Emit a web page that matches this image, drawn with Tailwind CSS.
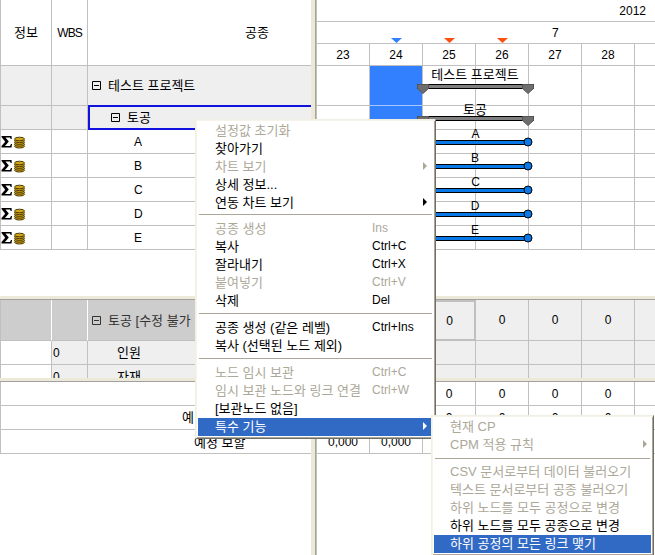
<!DOCTYPE html>
<html lang="ko">
<head>
<meta charset="utf-8">
<script src="https://cdn.jsdelivr.net/npm/@tailwindcss/browser@4"></script>
</head>
<body class="bg-white">
<div class="relative flex h-[555px] w-[655px] overflow-hidden bg-white text-[13px] leading-none text-black font-['Liberation_Sans','Noto_Sans_CJK_KR',sans-serif]">

  <!-- LEFT PANE -->
  <div class="flex w-[311px] shrink-0 flex-col">
    <div class="h-[296px] shrink-0">
      <div class="grid grid-cols-[52px_36px_1fr] grid-rows-[66px_40px_24px_24px_24px_24px_24px_24px] border-[#c0c0c0]">
        <div class="flex items-center justify-center border-r border-b border-l border-[#c0c0c0]">정보</div>
        <div class="flex items-center justify-center border-r border-b border-[#c0c0c0] text-[12px] tracking-[-1px]">WBS</div>
        <div class="flex items-center border-b border-[#c0c0c0] pl-[157px]">공종</div>

        <div class="border-r border-b border-l border-[#c0c0c0] bg-[#efefef]"></div>
        <div class="border-r border-b border-[#c0c0c0] bg-[#efefef]"></div>
        <div class="flex items-center gap-[7px] border-b border-[#c0c0c0] bg-[#efefef] pl-[4px]">
          <svg width="9" height="9" viewBox="0 0 9 9" class="shrink-0"><path d="M.5.5h8v8h-8zM2 4.500h5" fill="none" stroke="#000"/></svg>
          <span>테스트 프로젝트</span>
        </div>

        <div class="border-r border-b border-l border-[#c0c0c0] bg-[#efefef]"></div>
        <div class="border-r border-b border-[#c0c0c0] bg-[#efefef]"></div>
        <div class="-mt-px flex items-center gap-[7px] border-y-2 border-l-2 border-[#1212e0] bg-[#efefef] pl-[21px]">
          <svg width="9" height="9" viewBox="0 0 9 9" class="shrink-0"><path d="M.5.5h8v8h-8zM2 4.500h5" fill="none" stroke="#000"/></svg>
          <span>토공</span>
        </div>

        <div class="flex items-center border-r border-b border-l border-[#c0c0c0]"><svg width="26" height="14" viewBox="0 0 26 14"><path d="M.5 1h10l.3 3h-1L9 2.500H4.500l3.300 4-3.800 4.500H9l1-2h1l-.5 3.500H.5V11L4.200 6.800.5 2z" fill="#000"/><g stroke="#3a3000" stroke-width=".9" fill="#d4a418"><ellipse cx="18.500" cy="11.200" rx="5" ry="1.800"/><ellipse cx="18.500" cy="9.400" rx="5" ry="1.800"/><ellipse cx="18.500" cy="7.600" rx="5" ry="1.800"/><ellipse cx="18.500" cy="5.800" rx="5" ry="1.800"/><ellipse cx="18.500" cy="4" rx="5" ry="1.800"/></g></svg></div>
        <div class="border-r border-b border-[#c0c0c0]"></div>
        <div class="flex items-center border-b border-[#c0c0c0] pl-[46px] text-[12px]">A</div>

        <div class="flex items-center border-r border-b border-l border-[#c0c0c0]"><svg width="26" height="14" viewBox="0 0 26 14"><path d="M.5 1h10l.3 3h-1L9 2.500H4.500l3.300 4-3.800 4.500H9l1-2h1l-.5 3.500H.5V11L4.200 6.800.5 2z" fill="#000"/><g stroke="#3a3000" stroke-width=".9" fill="#d4a418"><ellipse cx="18.500" cy="11.200" rx="5" ry="1.800"/><ellipse cx="18.500" cy="9.400" rx="5" ry="1.800"/><ellipse cx="18.500" cy="7.600" rx="5" ry="1.800"/><ellipse cx="18.500" cy="5.800" rx="5" ry="1.800"/><ellipse cx="18.500" cy="4" rx="5" ry="1.800"/></g></svg></div>
        <div class="border-r border-b border-[#c0c0c0]"></div>
        <div class="flex items-center border-b border-[#c0c0c0] pl-[46px] text-[12px]">B</div>

        <div class="flex items-center border-r border-b border-l border-[#c0c0c0]"><svg width="26" height="14" viewBox="0 0 26 14"><path d="M.5 1h10l.3 3h-1L9 2.500H4.500l3.300 4-3.800 4.500H9l1-2h1l-.5 3.500H.5V11L4.200 6.800.5 2z" fill="#000"/><g stroke="#3a3000" stroke-width=".9" fill="#d4a418"><ellipse cx="18.500" cy="11.200" rx="5" ry="1.800"/><ellipse cx="18.500" cy="9.400" rx="5" ry="1.800"/><ellipse cx="18.500" cy="7.600" rx="5" ry="1.800"/><ellipse cx="18.500" cy="5.800" rx="5" ry="1.800"/><ellipse cx="18.500" cy="4" rx="5" ry="1.800"/></g></svg></div>
        <div class="border-r border-b border-[#c0c0c0]"></div>
        <div class="flex items-center border-b border-[#c0c0c0] pl-[46px] text-[12px]">C</div>

        <div class="flex items-center border-r border-b border-l border-[#c0c0c0]"><svg width="26" height="14" viewBox="0 0 26 14"><path d="M.5 1h10l.3 3h-1L9 2.500H4.500l3.300 4-3.800 4.500H9l1-2h1l-.5 3.500H.5V11L4.200 6.800.5 2z" fill="#000"/><g stroke="#3a3000" stroke-width=".9" fill="#d4a418"><ellipse cx="18.500" cy="11.200" rx="5" ry="1.800"/><ellipse cx="18.500" cy="9.400" rx="5" ry="1.800"/><ellipse cx="18.500" cy="7.600" rx="5" ry="1.800"/><ellipse cx="18.500" cy="5.800" rx="5" ry="1.800"/><ellipse cx="18.500" cy="4" rx="5" ry="1.800"/></g></svg></div>
        <div class="border-r border-b border-[#c0c0c0]"></div>
        <div class="flex items-center border-b border-[#c0c0c0] pl-[46px] text-[12px]">D</div>

        <div class="flex items-center border-r border-b border-l border-[#c0c0c0]"><svg width="26" height="14" viewBox="0 0 26 14"><path d="M.5 1h10l.3 3h-1L9 2.500H4.500l3.300 4-3.800 4.500H9l1-2h1l-.5 3.500H.5V11L4.200 6.800.5 2z" fill="#000"/><g stroke="#3a3000" stroke-width=".9" fill="#d4a418"><ellipse cx="18.500" cy="11.200" rx="5" ry="1.800"/><ellipse cx="18.500" cy="9.400" rx="5" ry="1.800"/><ellipse cx="18.500" cy="7.600" rx="5" ry="1.800"/><ellipse cx="18.500" cy="5.800" rx="5" ry="1.800"/><ellipse cx="18.500" cy="4" rx="5" ry="1.800"/></g></svg></div>
        <div class="border-r border-b border-[#c0c0c0]"></div>
        <div class="flex items-center border-b border-[#c0c0c0] pl-[46px] text-[12px]">E</div>
      </div>
    </div>

    <div class="h-[4px] shrink-0 border-b border-[#a0a0a0] bg-[#ece9d8]"></div>

    <div class="h-[78px] shrink-0 overflow-hidden">
      <div class="grid grid-cols-[52px_36px_1fr] grid-rows-[41px_24px_24px]">
        <div class="border-r border-b border-l border-r-white border-b-[#c0c0c0] border-l-[#c0c0c0] bg-[#cdcdcd]"></div>
        <div class="border-r border-b border-r-white border-b-[#c0c0c0] bg-[#cdcdcd]"></div>
        <div class="flex items-center gap-[7px] border-b border-[#c0c0c0] bg-[#cdcdcd] pl-[4px] text-[#333]">
          <svg width="9" height="9" viewBox="0 0 9 9" class="shrink-0"><path d="M.5.5h8v8h-8zM2 4.500h5" fill="none" stroke="#333"/></svg>
          <span>토공 [수정 불가</span>
        </div>
        <div class="border-r border-b border-l border-[#c0c0c0]"></div>
        <div class="flex items-center border-r border-b border-[#c0c0c0] bg-[#efefef] pl-px text-[12px]">0</div>
        <div class="flex items-center border-b border-[#c0c0c0] bg-[#efefef] pl-[29px]">인원</div>
        <div class="border-r border-b border-l border-[#c0c0c0]"></div>
        <div class="flex items-center border-r border-b border-[#c0c0c0] bg-[#efefef] pl-px text-[12px]">0</div>
        <div class="flex items-center border-b border-[#c0c0c0] bg-[#efefef] pl-[29px]">자재</div>
      </div>
    </div>

    <div class="h-[4px] shrink-0 border-b border-[#a0a0a0] bg-[#ece9d8]"></div>

    <div class="grid grid-rows-[24px_24px_24px] border-l border-[#c0c0c0]">
      <div class="border-b border-[#c0c0c0]"></div>
      <div class="flex items-center border-b border-[#c0c0c0] pl-[181px]">예</div>
      <div class="flex items-center border-b border-[#c0c0c0] pt-[2px] pl-[193px]">예정 보할</div>
    </div>
  </div>

  <!-- VERTICAL SPLITTER -->
  <div class="w-[5px] shrink-0 border-r border-[#a8a595] bg-[#ece9d8]"></div>

  <!-- RIGHT PANE -->
  <div class="relative flex min-w-0 flex-1 flex-col border-l border-[#c0c0c0]">
    <div class="relative h-[296px] shrink-0">
      <div class="flex h-[22px] items-center justify-end border-b border-[#c0c0c0] pr-[9px] text-[12px]">2012</div>
      <div class="flex h-[22px] items-center border-b border-[#c0c0c0] pl-[235px] text-[12px]">7</div>

      <div class="grid grid-cols-[53px_repeat(6,53px)_20px] grid-rows-[22px_40px_24px_24px_24px_24px_24px_24px] text-[12px]">
        <div class="flex items-center justify-center border-r border-b border-[#c0c0c0]">23</div>
        <div class="flex items-center justify-center border-r border-b border-[#c0c0c0]">24</div>
        <div class="flex items-center justify-center border-r border-b border-[#c0c0c0]">25</div>
        <div class="flex items-center justify-center border-r border-b border-[#c0c0c0]">26</div>
        <div class="flex items-center justify-center border-r border-b border-[#c0c0c0]">27</div>
        <div class="flex items-center justify-center border-r border-b border-[#c0c0c0]">28</div>
        <div class="border-r border-b border-[#c0c0c0]"></div>
        <div class="border-b border-[#c0c0c0]"></div>

        <div class="border-r border-b border-[#c0c0c0]"></div><div class="border-r border-b border-[#c0c0c0] border-b-[#a9c8ff] bg-[#3380ff]"></div><div class="border-r border-b border-[#c0c0c0]"></div><div class="border-r border-b border-[#c0c0c0]"></div><div class="border-r border-b border-[#c0c0c0]"></div><div class="border-r border-b border-[#c0c0c0]"></div><div class="border-r border-b border-[#c0c0c0]"></div><div class="border-b border-[#c0c0c0]"></div>
        <div class="border-r border-b border-[#c0c0c0]"></div><div class="border-r border-b border-[#c0c0c0] bg-[#3380ff]"></div><div class="border-r border-b border-[#c0c0c0]"></div><div class="border-r border-b border-[#c0c0c0]"></div><div class="border-r border-b border-[#c0c0c0]"></div><div class="border-r border-b border-[#c0c0c0]"></div><div class="border-r border-b border-[#c0c0c0]"></div><div class="border-b border-[#c0c0c0]"></div>
        <div class="border-r border-b border-[#c0c0c0]"></div><div class="border-r border-b border-[#c0c0c0]"></div><div class="border-r border-b border-[#c0c0c0]"></div><div class="border-r border-b border-[#c0c0c0]"></div><div class="border-r border-b border-[#c0c0c0]"></div><div class="border-r border-b border-[#c0c0c0]"></div><div class="border-r border-b border-[#c0c0c0]"></div><div class="border-b border-[#c0c0c0]"></div>
        <div class="border-r border-b border-[#c0c0c0]"></div><div class="border-r border-b border-[#c0c0c0]"></div><div class="border-r border-b border-[#c0c0c0]"></div><div class="border-r border-b border-[#c0c0c0]"></div><div class="border-r border-b border-[#c0c0c0]"></div><div class="border-r border-b border-[#c0c0c0]"></div><div class="border-r border-b border-[#c0c0c0]"></div><div class="border-b border-[#c0c0c0]"></div>
        <div class="border-r border-b border-[#c0c0c0]"></div><div class="border-r border-b border-[#c0c0c0]"></div><div class="border-r border-b border-[#c0c0c0]"></div><div class="border-r border-b border-[#c0c0c0]"></div><div class="border-r border-b border-[#c0c0c0]"></div><div class="border-r border-b border-[#c0c0c0]"></div><div class="border-r border-b border-[#c0c0c0]"></div><div class="border-b border-[#c0c0c0]"></div>
        <div class="border-r border-b border-[#c0c0c0]"></div><div class="border-r border-b border-[#c0c0c0]"></div><div class="border-r border-b border-[#c0c0c0]"></div><div class="border-r border-b border-[#c0c0c0]"></div><div class="border-r border-b border-[#c0c0c0]"></div><div class="border-r border-b border-[#c0c0c0]"></div><div class="border-r border-b border-[#c0c0c0]"></div><div class="border-b border-[#c0c0c0]"></div>
        <div class="border-r border-b border-[#c0c0c0]"></div><div class="border-r border-b border-[#c0c0c0]"></div><div class="border-r border-b border-[#c0c0c0]"></div><div class="border-r border-b border-[#c0c0c0]"></div><div class="border-r border-b border-[#c0c0c0]"></div><div class="border-r border-b border-[#c0c0c0]"></div><div class="border-r border-b border-[#c0c0c0]"></div><div class="border-b border-[#c0c0c0]"></div>
      </div>

      <!-- Gantt diagram overlay -->
      <svg class="absolute top-0 left-0" width="338" height="296" viewBox="317 0 338 296">
        <path d="M391 38h11l-5.500 5z" fill="#3380ff"/>
        <path d="M444 38h11l-5.500 5z" fill="#ff4f0f"/>
        <path d="M497 38h11l-5.500 5z" fill="#ff4f0f"/>
        <g fill="#000" text-anchor="middle" font-size="13" font-family="Liberation Sans, Noto Sans CJK KR, sans-serif">
          <text x="475" y="79">테스트 프로젝트</text>
          <text x="475" y="114">토공</text>
          <g font-size="12"><text x="475.500" y="138">A</text><text x="475" y="162">B</text><text x="475.500" y="186">C</text><text x="475" y="210">D</text><text x="475" y="234">E</text></g>
        </g>
        <g stroke="#000" fill="#808080">
          <rect x="417.500" y="84.500" width="116" height="4"/>
          <path d="M417.500 84.500h11v4l-5.500 5-5.500-5z" fill="#6e6e6e" stroke="#555"/>
          <path d="M522.500 84.500h11v4l-5.500 5-5.500-5z" fill="#6e6e6e" stroke="#555"/>
          <rect x="417.500" y="116.500" width="116" height="4"/>
          <path d="M417.500 116.500h11v4l-5.500 5-5.500-5z" fill="#6e6e6e" stroke="#555"/>
          <path d="M522.500 116.500h11v4l-5.500 5-5.500-5z" fill="#6e6e6e" stroke="#555"/>
        </g>
        <g stroke="#000" fill="#0a78e6">
          <rect x="422.500" y="140.500" width="105" height="4"/><circle cx="528" cy="142" r="4"/>
          <rect x="422.500" y="164.500" width="105" height="4"/><circle cx="528" cy="166" r="4"/>
          <rect x="422.500" y="188.500" width="105" height="4"/><circle cx="528" cy="190" r="4"/>
          <rect x="422.500" y="212.500" width="105" height="4"/><circle cx="528" cy="214" r="4"/>
          <rect x="422.500" y="236.500" width="105" height="4"/><circle cx="528" cy="238" r="4"/>
        </g>
      </svg>
    </div>

    <div class="h-[4px] shrink-0 border-b border-[#a0a0a0] bg-[#ece9d8]"></div>

    <div class="h-[78px] shrink-0 overflow-hidden bg-[#efefef] text-[12px]">
      <div class="grid grid-cols-[53px_53px_53px_53px_53px_53px_20px] grid-rows-[41px_24px_24px]">
        <div class="border-r border-b border-[#c0c0c0]"></div>
        <div class="border-r border-b border-[#c0c0c0]"></div>
        <div class="flex items-center justify-center border-2 border-[#c0c0c0]">0</div>
        <div class="flex items-center justify-center border-r border-b border-[#c0c0c0]">0</div>
        <div class="flex items-center justify-center border-r border-b border-[#c0c0c0]">0</div>
        <div class="flex items-center justify-center border-r border-b border-[#c0c0c0]">0</div>
        <div class="border-b border-[#c0c0c0]"></div>
        <div class="border-r border-b border-[#c0c0c0]"></div><div class="border-r border-b border-[#c0c0c0]"></div><div class="border-r border-b border-[#c0c0c0]"></div><div class="border-r border-b border-[#c0c0c0]"></div><div class="border-r border-b border-[#c0c0c0]"></div><div class="border-r border-b border-[#c0c0c0]"></div><div class="border-b border-[#c0c0c0]"></div>
        <div class="border-r border-b border-[#c0c0c0]"></div><div class="border-r border-b border-[#c0c0c0]"></div><div class="border-r border-b border-[#c0c0c0]"></div><div class="border-r border-b border-[#c0c0c0]"></div><div class="border-r border-b border-[#c0c0c0]"></div><div class="border-r border-b border-[#c0c0c0]"></div><div class="border-b border-[#c0c0c0]"></div>
      </div>
    </div>

    <div class="h-[4px] shrink-0 border-b border-[#a0a0a0] bg-[#ece9d8]"></div>

    <div class="grid grid-cols-[53px_53px_53px_53px_53px_53px_20px] grid-rows-[24px_24px_24px] text-[12px]">
      <div class="border-r border-b border-[#c0c0c0]"></div><div class="border-r border-b border-[#c0c0c0]"></div>
      <div class="flex items-center justify-center border-r border-b border-[#c0c0c0]">0</div><div class="flex items-center justify-center border-r border-b border-[#c0c0c0]">0</div><div class="flex items-center justify-center border-r border-b border-[#c0c0c0]">0</div><div class="flex items-center justify-center border-r border-b border-[#c0c0c0]">0</div><div class="border-b border-[#c0c0c0]"></div>
      <div class="border-r border-b border-[#c0c0c0]"></div><div class="border-r border-b border-[#c0c0c0]"></div>
      <div class="flex items-center justify-center border-r border-b border-[#c0c0c0]">0</div><div class="flex items-center justify-center border-r border-b border-[#c0c0c0]">0</div><div class="flex items-center justify-center border-r border-b border-[#c0c0c0]">0</div><div class="flex items-center justify-center border-r border-b border-[#c0c0c0]">0</div><div class="border-b border-[#c0c0c0]"></div>
      <div class="flex items-center justify-center border-r border-b border-[#c0c0c0]">0,000</div><div class="flex items-center justify-center border-r border-b border-[#c0c0c0]">0,000</div>
      <div class="border-r border-b border-[#c0c0c0]"></div><div class="border-r border-b border-[#c0c0c0]"></div><div class="border-r border-b border-[#c0c0c0]"></div><div class="border-r border-b border-[#c0c0c0]"></div><div class="border-b border-[#c0c0c0]"></div>
    </div>
  </div>

  <!-- CONTEXT MENU -->
  <div class="absolute top-[119px] left-[195px] z-10 flex w-[241px] flex-col border border-t-[#f1efe2] border-r-[#716f64] border-b-[#716f64] border-l-[#f1efe2] bg-white p-[2px] shadow-[inset_1px_1px_0_#f6f4ea,inset_-1px_-1px_0_#aca899]">
    <div class="flex h-[18px] items-center pb-[2px] pl-[17px] text-[#aca899]">설정값 초기화</div>
    <div class="flex h-[18px] items-center pb-[2px] pl-[17px]">찾아가기</div>
    <div class="flex h-[18px] items-center justify-between pr-[6px] pb-[2px] pl-[17px] text-[#aca899]">차트 보기<span class="h-0 w-0 border-y-[4px] border-l-[4px] border-y-transparent border-l-[#aca899]"></span></div>
    <div class="flex h-[18px] items-center pb-[2px] pl-[17px]">상세 정보...</div>
    <div class="flex h-[18px] items-center justify-between pr-[6px] pb-[2px] pl-[17px]">연동 차트 보기<span class="h-0 w-0 border-y-[4px] border-l-[4px] border-y-transparent border-l-black"></span></div>
    <div class="mx-[1px] mt-[2px] mb-[4px] h-[2px] border-t border-[#aca899]"></div>
    <div class="flex h-[18px] items-center pb-[2px] pl-[17px] text-[#aca899]"><span class="w-[157px]">공종 생성</span><span class="text-[12px]">Ins</span></div>
    <div class="flex h-[18px] items-center pb-[2px] pl-[17px]"><span class="w-[157px]">복사</span><span class="text-[12px]">Ctrl+C</span></div>
    <div class="flex h-[18px] items-center pb-[2px] pl-[17px]"><span class="w-[157px]">잘라내기</span><span class="text-[12px]">Ctrl+X</span></div>
    <div class="flex h-[18px] items-center pb-[2px] pl-[17px] text-[#aca899]"><span class="w-[157px]">붙여넣기</span><span class="text-[12px]">Ctrl+V</span></div>
    <div class="flex h-[18px] items-center pb-[2px] pl-[17px]"><span class="w-[157px]">삭제</span><span class="text-[12px]">Del</span></div>
    <div class="mx-[1px] mt-[3px] mb-[4px] h-[2px] border-t border-[#aca899]"></div>
    <div class="flex h-[18px] items-center pb-[2px] pl-[17px]"><span class="w-[157px]">공종 생성 (같은 레벨)</span><span class="text-[12px]">Ctrl+Ins</span></div>
    <div class="flex h-[18px] items-center pb-[2px] pl-[17px]">복사 (선택된 노드 제외)</div>
    <div class="mx-[1px] mt-[3px] mb-[4px] h-[2px] border-t border-[#aca899]"></div>
    <div class="flex h-[18px] items-center pb-[2px] pl-[17px] text-[#aca899]"><span class="w-[157px]">노드 임시 보관</span><span class="text-[12px]">Ctrl+C</span></div>
    <div class="flex h-[18px] items-center pb-[2px] pl-[17px] text-[#aca899]"><span class="w-[157px]">임시 보관 노드와 링크 연결</span><span class="text-[12px]">Ctrl+W</span></div>
    <div class="flex h-[18px] items-center pb-[2px] pl-[17px]">[보관노드 없음]</div>
    <div class="flex h-[18px] items-center justify-between bg-[#316ac5] pr-[6px] pb-[2px] pl-[17px] text-white">특수 기능<span class="h-0 w-0 border-y-[4px] border-l-[4px] border-y-transparent border-l-white"></span></div>
  </div>

  <!-- SUBMENU -->
  <div class="absolute top-[415px] left-[431px] z-20 flex w-[223px] flex-col border border-t-[#f1efe2] border-r-[#716f64] border-b-[#716f64] border-l-[#f1efe2] bg-white p-[2px] shadow-[inset_1px_1px_0_#f6f4ea,inset_-1px_-1px_0_#aca899]">
    <div class="flex h-[18px] items-center pb-[2px] pl-[16px] text-[#aca899]">현재 CP</div>
    <div class="flex h-[18px] items-center justify-between pr-[4px] pb-[2px] pl-[16px] text-[#aca899]">CPM 적용 규칙<span class="h-0 w-0 border-y-[4px] border-l-[4px] border-y-transparent border-l-[#aca899]"></span></div>
    <div class="mx-[1px] mt-[4px] mb-[3px] h-[2px] border-t border-[#aca899]"></div>
    <div class="flex h-[18px] items-center pb-[2px] pl-[16px] text-[#aca899]">CSV 문서로부터 데이터 불러오기</div>
    <div class="flex h-[18px] items-center pb-[2px] pl-[16px] text-[#aca899]">텍스트 문서로부터 공종 불러오기</div>
    <div class="flex h-[18px] items-center pb-[2px] pl-[16px] text-[#aca899]">하위 노드를 모두 공정으로 변경</div>
    <div class="flex h-[18px] items-center pb-[2px] pl-[16px]">하위 노드를 모두 공종으로 변경</div>
    <div class="flex h-[18px] items-center bg-[#316ac5] pb-[2px] pl-[16px] text-white">하위 공정의 모든 링크 맺기</div>
  </div>
</div>
</body>
</html>
